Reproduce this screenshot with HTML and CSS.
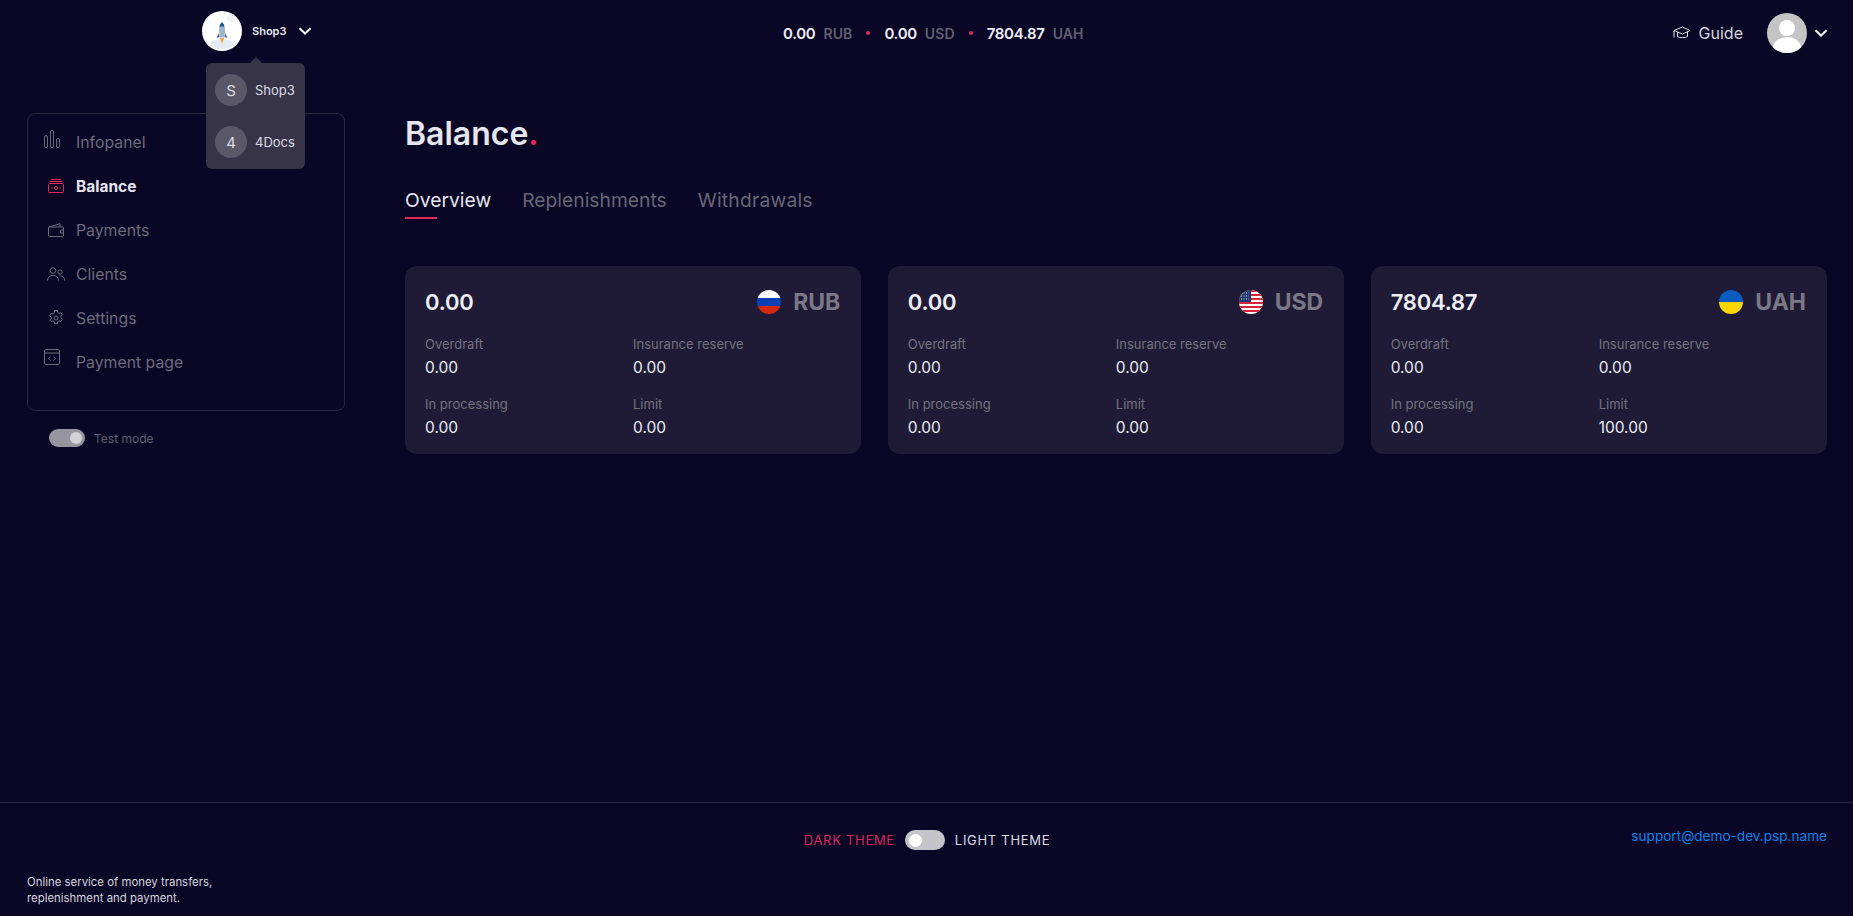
FILE: index.html
```html
<!DOCTYPE html>
<html lang="en">

<head>
    <meta charset="UTF-8">
    <meta name="viewport" content="width=device-width, initial-scale=1.0">
    <title>Balance</title>
    <link rel="stylesheet" href="styles.css">
</head>

<body>
    <header class="topbar">
        <div class="shop-switch">
            <div class="shop-logo">
                <svg width="40" height="40" viewBox="0 0 40 40">
                    <ellipse cx="20" cy="33" rx="11" ry="5" fill="#e3ebf4" />
                    <circle cx="29" cy="7" r="4" fill="#eef1f6" />
                    <path d="M18 27l2 6 2-6z" fill="#f0a23a" />
                    <path d="M17 22l-2.500 5 3-1zM23 22l2.500 5-3-1z" fill="#2f5f9e" />
                    <path d="M20 11c-2.500 3-3.200 6-3 9l.8 6.500h4.400l.8-6.500c.2-3-.5-6-3-9z" fill="#9db4c8" />
                    <path d="M20 11c-1.300 1.500-2.200 3-2.600 4.500h5.200c-.4-1.500-1.300-3-2.600-4.500z" fill="#1f4f94" />
                </svg>
            </div>
            <span class="shop-name">Shop3</span>
            <svg class="chevron" width="14" height="8" viewBox="0 0 14 8">
                <path d="M1.500 1.200L7 6.500l5.500-5.300" />
            </svg>
            <div class="shop-menu">
                <div class="shop-item"><span class="shop-badge">S</span>Shop3</div>
                <div class="shop-item"><span class="shop-badge">4</span>4Docs</div>
            </div>
        </div>

        <div class="totals">
            <b>0.00</b><span class="code">RUB</span><i class="dot"></i>
            <b>0.00</b><span class="code">USD</span><i class="dot"></i>
            <b>7804.87</b><span class="code">UAH</span>
        </div>

        <div class="user-area">
            <a class="guide">
                <svg width="18" height="14" viewBox="0 0 18 14" fill="none" stroke="#e4e4ea" stroke-width="1">
                    <path d="M1 4.500L9.500 1 17 4.500 9.500 8z" />
                    <path d="M4.500 6v4.500c1.500 1.500 8.500 1.500 10 0V5.500" />
                    <path d="M1 4.500v7" />
                </svg>
                Guide
            </a>
            <div class="avatar">
                <svg width="40" height="40" viewBox="0 0 40 40">
                    <circle cx="20" cy="15" r="8" fill="#fff" />
                    <ellipse cx="20" cy="35" rx="14" ry="11" fill="#fff" />
                </svg>
            </div>
            <svg class="chevron" width="14" height="8" viewBox="0 0 14 8">
                <path d="M1.500 1.200L7 6.500l5.500-5.300" />
            </svg>
        </div>
    </header>

    <main class="layout">
        <aside class="sidebar">
            <nav class="side-nav">
                <a class="nav-item icon-wide icon-high">
                    <svg width="16" height="18" viewBox="0 0 16 18">
                        <rect x="0.500" y="5.500" width="3" height="12" rx="1.500" />
                        <rect x="6.500" y="0.500" width="3" height="17" rx="1.500" />
                        <rect x="12.500" y="8.500" width="3" height="9" rx="1.500" />
                    </svg>
                    Infopanel
                </a>
                <a class="nav-item active">
                    <svg width="16" height="14" viewBox="0 0 16 14">
                        <rect x="0.500" y="4.500" width="15" height="9" rx="1" />
                        <path d="M3 0.500h10M1.500 2.500h13" />
                        <circle cx="8" cy="9" r="1.500" />
                        <path d="M3.500 9h1.500M11 9h1.500" />
                    </svg>
                    Balance
                </a>
                <a class="nav-item">
                    <svg width="16" height="14" viewBox="0 0 16 14">
                        <path d="M1 4h13.500a1 1 0 0 1 1 1v7.500a1 1 0 0 1-1 1h-13a1 1 0 0 1-1-1V4.500zM1 4l11-3.300V4" />
                        <path d="M15.500 7h-3v3h3" />
                    </svg>
                    Payments
                </a>
                <a class="nav-item icon-clients">
                    <svg width="18" height="14" viewBox="0 0 18 14">
                        <circle cx="6" cy="3.500" r="2.800" />
                        <circle cx="13" cy="5" r="2.200" />
                        <path d="M0.500 13.500c0-7 11-7 11 0M12.500 9c3-.6 5 1.200 5 4.500" />
                    </svg>
                    Clients
                </a>
                <a class="nav-item">
                    <svg width="16" height="16" viewBox="1.200 0 13.600 16">
                        <circle cx="8" cy="8" r="2" />
                        <path d="M6.600 .5h2.800l.4 2.100 1.200.7 2-.7 1.400 2.400-1.600 1.400v1.400l1.600 1.400-1.400 2.400-2-.7-1.200.7-.4 2.100H6.600l-.4-2.100-1.200-.7-2 .7L1.600 10l1.600-1.400V7.200L1.600 5.800 3 3.400l2 .7 1.200-.7z" />
                    </svg>
                    Settings
                </a>
                <a class="nav-item icon-wide icon-higher">
                    <svg width="16" height="16" viewBox="0 0 16 16">
                        <rect x="0.500" y="0.500" width="15" height="15" rx="1.500" />
                        <path d="M0.500 4h15M6.500 7.500L4.500 9.500l2 2M9.500 7.500l2 2-2 2" />
                    </svg>
                    Payment page
                </a>
            </nav>
            <div class="test-mode">
                <span class="switch switch-test"></span>
                Test mode
            </div>
        </aside>

        <section class="content">
            <h1 class="page-title">Balance<span>.</span></h1>
            <div class="tabs">
                <a class="tab tab-active">Overview</a>
                <a class="tab">Replenishments</a>
                <a class="tab">Withdrawals</a>
            </div>

            <div class="cards">
                <div class="card">
                    <div class="card-head">
                        <span class="card-sum">0.00</span>
                        <span class="card-cur">
                            <svg class="flag" width="24" height="24" viewBox="0 0 24 24">
                                <rect width="24" height="8" fill="#fff" />
                                <rect y="8" width="24" height="8" fill="#0b3fb5" />
                                <rect y="16" width="24" height="8" fill="#d5290f" />
                            </svg>
                            RUB
                        </span>
                    </div>
                    <div class="card-grid">
                        <div><p class="label">Overdraft</p><p class="value">0.00</p></div>
                        <div><p class="label">Insurance reserve</p><p class="value">0.00</p></div>
                        <div><p class="label">In processing</p><p class="value">0.00</p></div>
                        <div><p class="label">Limit</p><p class="value">0.00</p></div>
                    </div>
                </div>

                <div class="card">
                    <div class="card-head">
                        <span class="card-sum">0.00</span>
                        <span class="card-cur">
                            <svg class="flag" width="24" height="24" viewBox="0 0 24 24">
                                <rect width="24" height="24" fill="#fff" />
                                <path d="M0 1h24M0 5h24M0 9h24M0 13h24M0 17h24M0 21h24" stroke="#d8233f" stroke-width="2" />
                                <rect width="12" height="12" fill="#20386f" />
                                <path d="M2 3h8M2 6h8M2 9h8" stroke="#dfe5f2" stroke-width="1" stroke-dasharray="1 1.500" />
                            </svg>
                            USD
                        </span>
                    </div>
                    <div class="card-grid">
                        <div><p class="label">Overdraft</p><p class="value">0.00</p></div>
                        <div><p class="label">Insurance reserve</p><p class="value">0.00</p></div>
                        <div><p class="label">In processing</p><p class="value">0.00</p></div>
                        <div><p class="label">Limit</p><p class="value">0.00</p></div>
                    </div>
                </div>

                <div class="card">
                    <div class="card-head">
                        <span class="card-sum">7804.87</span>
                        <span class="card-cur">
                            <svg class="flag" width="24" height="24" viewBox="0 0 24 24">
                                <rect width="24" height="12" fill="#0a5cc0" />
                                <rect y="12" width="24" height="12" fill="#fdd600" />
                            </svg>
                            UAH
                        </span>
                    </div>
                    <div class="card-grid">
                        <div><p class="label">Overdraft</p><p class="value">0.00</p></div>
                        <div><p class="label">Insurance reserve</p><p class="value">0.00</p></div>
                        <div><p class="label">In processing</p><p class="value">0.00</p></div>
                        <div><p class="label">Limit</p><p class="value">100.00</p></div>
                    </div>
                </div>
            </div>
        </section>
    </main>

    <footer class="footer">
        <p class="footer-text">Online service of money transfers,<br>replenishment and payment.</p>
        <div class="theme-switch">
            <span class="theme-dark">DARK THEME</span>
            <span class="switch switch-theme"></span>
            <span class="theme-light">LIGHT THEME</span>
        </div>
        <a class="support">support@demo-dev.psp.name</a>
    </footer>
</body>

</html>
```

FILE: styles.css
```css
* {
    box-sizing: border-box;
}

body {
    font-family: Inter, 'Noto Sans', sans-serif;
    margin: 0;
    background-color: #0a0626;
    color: #fff;
    min-height: 100vh;
    display: flex;
    flex-direction: column;
    overflow: hidden;
}

p,
h1 {
    margin: 0;
}

/* top bar */
.topbar {
    height: 64px;
    padding: 11px 25px 0 202px;
    display: flex;
    align-items: flex-start;
}

.shop-switch {
    position: relative;
    width: 581px;
    height: 40px;
    display: flex;
    align-items: center;
}

.shop-logo,
.avatar {
    width: 40px;
    height: 40px;
    border-radius: 50%;
    overflow: hidden;
    flex-shrink: 0;
}

.shop-logo {
    background-color: #fff;
}

.shop-logo svg,
.avatar svg {
    display: block;
}

.shop-name {
    margin-left: 10px;
    font-size: 11px;
    font-weight: 600;
    color: #e6e6ee;
}

.chevron {
    fill: none;
    stroke: #fff;
    stroke-width: 2;
}

.shop-switch .chevron {
    margin-left: 12px;
}

.shop-menu {
    position: absolute;
    top: 52px;
    left: 4px;
    width: 99px;
    height: 106px;
    padding: 11px 9px;
    background-color: #373447;
    border-radius: 6px;
}

.shop-menu::before {
    content: '';
    position: absolute;
    top: -6px;
    left: 44px;
    width: 0;
    height: 0;
    border-left: 6px solid transparent;
    border-right: 6px solid transparent;
    border-bottom: 6px solid #373447;
}

.shop-item {
    display: flex;
    align-items: center;
    gap: 8px;
    height: 32px;
    margin-bottom: 20px;
    font-size: 13px;
    color: #dcdce6;
}

.shop-badge {
    width: 32px;
    height: 32px;
    border-radius: 50%;
    background-color: #5a5768;
    display: flex;
    align-items: center;
    justify-content: center;
    font-size: 15px;
    flex-shrink: 0;
}

.totals {
    height: 44px;
    display: flex;
    align-items: center;
    font-size: 15px;
    color: #eeeef4;
}

.totals b {
    font-weight: 600;
    letter-spacing: -0.300px;
}

.totals .code {
    margin-left: 8px;
    font-weight: 600;
    font-size: 14px;
    letter-spacing: 0.100px;
    color: #62606f;
}

.dot {
    width: 4px;
    height: 4px;
    margin: 0 14px;
    border-radius: 50%;
    background-color: #e8265e;
}

.user-area {
    margin-left: auto;
    display: flex;
    align-items: center;
    height: 44px;
}

.guide {
    display: flex;
    align-items: center;
    gap: 8px;
    font-size: 16px;
    color: #d6d6df;
}

.avatar {
    margin-left: 24px;
    background-color: #c4c4c4;
}

.user-area .chevron {
    margin-left: 7px;
}

/* main part */
.layout {
    flex: 1;
    display: flex;
    padding: 0 26px 0 27px;
}

.sidebar {
    width: 318px;
    margin-top: 49px;
    flex-shrink: 0;
}

.side-nav {
    height: 298px;
    padding: 6px 0 0 20px;
    border: 1px solid #2b2841;
    border-radius: 8px;
}

.nav-item {
    display: grid;
    grid-template-columns: 28px 1fr;
    align-items: center;
    height: 44px;
    font-size: 15.800px;
    color: #6d6b7b;
}

.nav-item svg {
    fill: none;
    stroke: #6d6b7b;
    stroke-width: 1;
}

.icon-wide {
    margin-left: -4px;
    grid-template-columns: 32px 1fr;
}

.icon-high svg {
    margin-top: -6px;
}

.icon-higher svg {
    margin-top: -10px;
}

.icon-clients {
    margin-left: -1px;
    grid-template-columns: 29px 1fr;
}

.nav-item.active {
    color: #e6e6ee;
    font-size: 15.500px;
    font-weight: 700;
}

.nav-item.active svg {
    stroke: #e8265e;
}

.test-mode {
    display: flex;
    align-items: center;
    gap: 9px;
    margin: 18px 0 0 22px;
    font-size: 12px;
    color: #5f5d6d;
}

.switch {
    position: relative;
    display: block;
    border-radius: 10px;
    flex-shrink: 0;
}

.switch::after {
    content: '';
    position: absolute;
    border-radius: 50%;
}

.switch-test {
    width: 36px;
    height: 18px;
    background-color: #96949f;
}

.switch-test::after {
    top: 3px;
    right: 3px;
    width: 12px;
    height: 12px;
    background-color: #d3d2d8;
}

.switch-theme {
    width: 40px;
    height: 20px;
    background-color: #c5c4cb;
}

.switch-theme::after {
    top: 4px;
    left: 4px;
    width: 13px;
    height: 13px;
    background-color: #fff;
}

.content {
    flex: 1;
    margin-left: 60px;
    padding-top: 51px;
}

.page-title {
    font-size: 32px;
    line-height: 38px;
    font-weight: 600;
    color: #e6e6ee;
}

.page-title span {
    color: #e8265e;
}

.tabs {
    display: flex;
    gap: 31px;
    margin-top: 35px;
}

.tab {
    position: relative;
    font-size: 19.300px;
    line-height: 24px;
    color: #686674;
}

.tab:last-child {
    letter-spacing: 0.200px;
}

.tab-active {
    color: #e6e6ee;
}

.tab-active::after {
    content: '';
    position: absolute;
    left: 0;
    bottom: -7px;
    width: 32px;
    height: 2px;
    background-color: #e8265e;
}

.cards {
    display: grid;
    grid-template-columns: repeat(3, 1fr);
    gap: 26.500px;
    margin-top: 54px;
}

.card {
    height: 188px;
    padding: 21px 21px 20px 20px;
    background-color: #1f1b36;
    border-radius: 12px;
}

.card-head {
    display: flex;
    justify-content: space-between;
    align-items: center;
    height: 30px;
}

.card-sum {
    font-size: 22px;
    font-weight: 600;
    letter-spacing: -0.200px;
    color: #eeeef4;
}

.card-cur {
    display: flex;
    align-items: center;
    gap: 12px;
    font-size: 23px;
    font-weight: 700;
    color: #7b7887;
}

.flag {
    border-radius: 50%;
}

.card-grid {
    display: grid;
    grid-template-columns: 208px 1fr;
    row-gap: 17px;
    margin-top: 18px;
}

.label {
    font-size: 13px;
    line-height: 18px;
    color: #75727f;
}

.value {
    margin-top: 5px;
    font-size: 15.500px;
    line-height: 20px;
    color: #eeeef4;
}

/* footer */
.footer {
    position: relative;
    height: 114px;
    padding: 0 26px 0 27px;
    border-top: 1px solid #2b2841;
    display: flex;
    justify-content: center;
}

.theme-switch {
    display: flex;
    align-items: center;
    gap: 10px;
    height: 20px;
    margin-top: 27px;
    font-size: 13px;
    letter-spacing: 0.700px;
}

.theme-dark {
    color: #d8265a;
}

.theme-light {
    color: #dcdce6;
}

.footer-text {
    position: absolute;
    left: 27px;
    top: 71px;
    font-size: 11.400px;
    line-height: 16px;
    color: #d6d6df;
}

.support {
    position: absolute;
    right: 26px;
    top: 25px;
    font-size: 13.600px;
    color: #0a84ea;
}
```
